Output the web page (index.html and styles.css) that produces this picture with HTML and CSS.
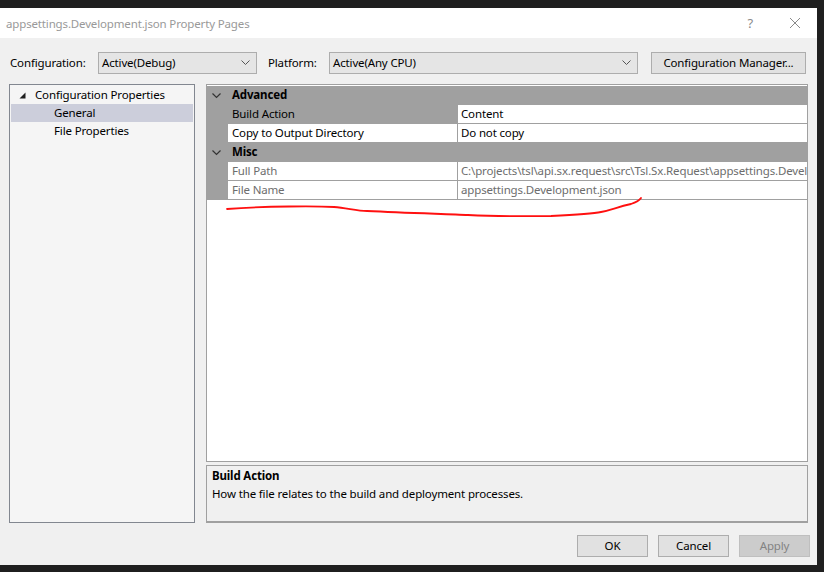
FILE: index.html
```html
<!DOCTYPE html>
<html lang="en">
<head>
    <meta charset="UTF-8">
    <title>appsettings.Development.json Property Pages</title>
    <link rel="stylesheet" href="styles.css">
</head>
<body>

<div class="window">
    <div class="titlebar">
        <span class="title">appsettings.Development.json Property Pages</span>
        <span class="help">?</span>
        <svg class="close" width="12" height="12" viewBox="0 0 12 12"><path d="M1 1L11 11M11 1L1 11" stroke="#8a8a8a" stroke-width="1"/></svg>
    </div>

    <div class="toolbar">
        <span class="label">Configuration:</span>
        <div class="combo combo-config">
            <span>Active(Debug)</span>
            <svg width="9" height="6" viewBox="0 0 9 6"><path d="M0.5 0.5L4.5 4.5L8.5 0.5" fill="none" stroke="#555" stroke-width="1"/></svg>
        </div>
        <span class="label label-platform">Platform:</span>
        <div class="combo combo-platform">
            <span>Active(Any CPU)</span>
            <svg width="9" height="6" viewBox="0 0 9 6"><path d="M0.5 0.5L4.5 4.5L8.5 0.5" fill="none" stroke="#555" stroke-width="1"/></svg>
        </div>
        <button class="btn btn-manager">Configuration Manager...</button>
    </div>

    <div class="main">
        <div class="tree">
            <div class="tree-item">
                <svg class="tri" width="7" height="7" viewBox="0 0 7 7"><path d="M6.5 0.5V6.5H0.5Z" fill="#1e1e1e"/></svg>
                Configuration Properties
            </div>
            <div class="tree-item child selected">General</div>
            <div class="tree-item child">File Properties</div>
        </div>

        <div class="right">
            <div class="grid">
                <div class="grid-row header">
                    <div class="margin"><svg width="9" height="6" viewBox="0 0 9 6"><path d="M0.5 0.5L4.5 4.5L8.5 0.5" fill="none" stroke="#333" stroke-width="1.2"/></svg></div>
                    <div class="cat">Advanced</div>
                </div>
                <div class="grid-row">
                    <div class="margin"></div>
                    <div class="name selected">Build Action</div>
                    <div class="value">Content</div>
                </div>
                <div class="grid-row">
                    <div class="margin"></div>
                    <div class="name">Copy to Output Directory</div>
                    <div class="value">Do not copy</div>
                </div>
                <div class="grid-row header">
                    <div class="margin"><svg width="9" height="6" viewBox="0 0 9 6"><path d="M0.5 0.5L4.5 4.5L8.5 0.5" fill="none" stroke="#333" stroke-width="1.2"/></svg></div>
                    <div class="cat">Misc</div>
                </div>
                <div class="grid-row readonly">
                    <div class="margin"></div>
                    <div class="name">Full Path</div>
                    <div class="value">C:\projects\tsl\api.sx.request\src\Tsl.Sx.Request\appsettings.Devel</div>
                </div>
                <div class="grid-row readonly">
                    <div class="margin"></div>
                    <div class="name">File Name</div>
                    <div class="value">appsettings.Development.json</div>
                </div>

                <svg class="scribble" width="450" height="26" viewBox="0 0 450 26">
                    <path d="M20 17 C60 14, 110 14, 127 15 C140 16, 150 19, 160 19 C200 21, 240 22, 261 23 C300 25, 330 24, 344 24 C365 23, 385 22, 394 20 C405 18, 410 15, 424 12 C430 10, 432 9, 434 6" fill="none" stroke="#ff1010" stroke-width="1.8" stroke-linecap="round"/>
                </svg>
            </div>

            <div class="description">
                <div class="desc-title">Build Action</div>
                <div class="desc-text">How the file relates to the build and deployment processes.</div>
            </div>
        </div>
    </div>

    <div class="buttons">
        <button class="btn">OK</button>
        <button class="btn">Cancel</button>
        <button class="btn disabled">Apply</button>
    </div>
</div>

</body>
</html>
```

FILE: styles.css
```css
* {
    margin: 0;
    padding: 0;
    box-sizing: border-box;
}
body {
    background: #1f1f1f;
    font-family: "Noto Sans", "Open Sans", sans-serif;
    font-size: 11.5px;
    letter-spacing: -0.15px;
    color: #000;
    width: 824px;
    height: 572px;
    overflow: hidden;
}
.window {
    margin-top: 8px;
    width: 817px;
    height: 557px;
    background: #f0f0f0;
    display: flex;
    flex-direction: column;
}
.titlebar {
    height: 30px;
    background: #fff;
    display: flex;
    align-items: center;
    padding-left: 6px;
}
.title {
    color: #999;
    flex: 1;
    padding-top: 1px;
}
.help {
    color: #8a8a8a;
    margin-right: 36px;
    font-size: 13px;
}
.close {
    margin-right: 16px;
}
.toolbar {
    margin-top: 14px;
    height: 22px;
    display: flex;
    align-items: center;
    padding-left: 10px;
}
.label {
    width: 88px;
    padding-bottom: 1px;
}
.label-platform {
    width: 61px;
    margin-left: 11px;
}
.combo {
    height: 22px;
    background: #e5e5e5;
    border: 1px solid #adadad;
    display: flex;
    align-items: center;
    justify-content: space-between;
    padding: 0 6px 1px 3px;
}
.combo-config {
    width: 159px;
}
.combo-platform {
    width: 309px;
}
.btn {
    height: 22px;
    background: #e1e1e1;
    border: 1px solid #adadad;
    font-family: inherit;
    font-size: 11.5px;
    letter-spacing: -0.15px;
    color: #000;
    padding-bottom: 1px;
}
.btn-manager {
    width: 155px;
    margin-left: 13px;
}
.main {
    margin-top: 10px;
    height: 439px;
    display: flex;
    padding-left: 9px;
}
.tree {
    width: 186px;
    height: 100%;
    background: #f5f5f5;
    border: 1px solid #828790;
    padding: 1px 1px;
}
.tree-item {
    height: 18px;
    line-height: 18px;
    display: flex;
    align-items: center;
    padding-left: 8px;
}
.tri {
    margin-right: 9px;
    margin-top: 1px;
}
.tree-item.child {
    padding-left: 43px;
}
.tree-item.selected {
    background: #cccedb;
}
.right {
    margin-left: 11px;
    width: 602px;
    display: flex;
    flex-direction: column;
}
.grid {
    position: relative;
    height: 378px;
    background: #fff;
    border: 1px solid #a0a0a0;
    padding-top: 1px;
    overflow: hidden;
}
.grid-row {
    display: flex;
    height: 19px;
    line-height: 18px;
}
.margin {
    width: 21px;
    flex: none;
    background: #a0a0a0;
    display: flex;
    align-items: center;
    justify-content: center;
    padding-right: 2px;
}
.header {
    background: #a0a0a0;
}
.cat {
    font-weight: bold;
    padding-left: 4px;
}
.name {
    width: 229px;
    flex: none;
    padding-left: 4px;
    border-bottom: 1px solid #a0a0a0;
    white-space: nowrap;
}
.name.selected {
    background: #a0a0a0;
}
.value {
    flex: 1;
    padding-left: 3px;
    border-left: 1px solid #a0a0a0;
    border-bottom: 1px solid #a0a0a0;
    white-space: nowrap;
    overflow: hidden;
}
.readonly .name,
.readonly .value {
    color: #6d6d6d;
}
.scribble {
    position: absolute;
    left: 0;
    top: 107px;
}
.description {
    margin-top: 3px;
    height: 58px;
    border: 1px solid #a0a0a0;
    border-bottom-width: 2px;
    padding: 2px 5px;
}
.desc-title {
    font-weight: bold;
    height: 18px;
}
.desc-text {
    margin-top: 0;
}
.buttons {
    margin-top: 12px;
    display: flex;
    justify-content: flex-end;
    gap: 10px;
    padding-right: 7px;
}
.buttons .btn {
    width: 71px;
}
.btn.disabled {
    background: #cccccc;
    border-color: #bfbfbf;
    color: #838383;
}
```
